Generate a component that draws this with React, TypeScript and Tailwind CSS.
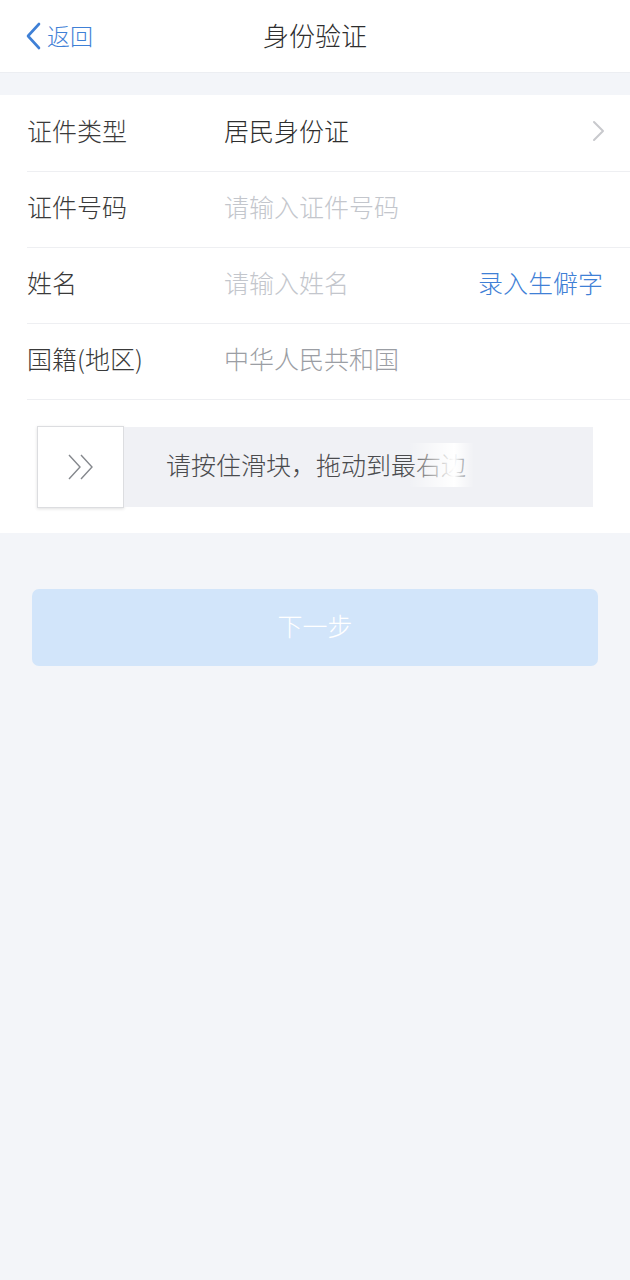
const font = { fontFamily: '"Noto Sans CJK SC", "Noto Sans", sans-serif' };

function Row({ label, children }: { label: string; children: React.ReactNode }) {
  return (
    <div className="ml-[27px] flex h-[76px] items-center border-b border-[#eeeff2] pr-[27px] pb-[5px]">
      <div className="w-[197px] text-[25px] text-[#3a3a3a]">{label}</div>
      <div className="flex flex-1 items-center justify-between text-[25px]">{children}</div>
    </div>
  );
}

export default function App() {
  return (
    <div className="min-h-[1280px] bg-[#f3f5f9] font-light" style={font}>
      {/* header */}
      <div className="relative flex h-[73px] items-center justify-center border-b border-[#eceef2] bg-white pb-[3px]">
        <div className="absolute left-[24px] top-0 flex h-full items-center pb-[1px] text-[#3f80d6]">
          <svg width="20" height="28" viewBox="0 0 20 28" fill="none" className="mr-[3px]">
            <path d="M15 2 L4 14 L15 26" stroke="#3f80d6" strokeWidth="2.6" strokeLinecap="round" strokeLinejoin="round" />
          </svg>
          <span className="text-[23px]">返回</span>
        </div>
        <h1 className="text-[26px] text-[#2e2e2e]">身份验证</h1>
      </div>

      <div className="mt-[22px] bg-white pt-[1px] pb-[25px]">
        <Row label="证件类型">
          <span className="text-[#2e2e2e]">居民身份证</span>
          <svg width="14" height="22" viewBox="0 0 14 22" fill="none" className="mr-[-2px]">
            <path d="M3 2 L12 11 L3 20" stroke="#c8c9cd" strokeWidth="2" strokeLinecap="round" strokeLinejoin="round" />
          </svg>
        </Row>
        <Row label="证件号码">
          <span className="text-[#c3c6cc]">请输入证件号码</span>
        </Row>
        <Row label="姓名">
          <span className="text-[#c3c6cc]">请输入姓名</span>
          <span className="text-[#3f80d6]">录入生僻字</span>
        </Row>
        <Row label="国籍(地区)">
          <span className="text-[#9b9ea4]">中华人民共和国</span>
        </Row>

        {/* slider */}
        <div className="mx-[37px] mt-[26px] flex h-[82px]">
          <div className="flex w-[87px] items-center justify-center border border-[#dcdde0] bg-white shadow-[0_1px_3px_rgba(0,0,0,0.12)]">
            <svg width="30" height="26" viewBox="0 0 30 26" fill="none">
              <path d="M3 1 L14 13 L3 25" stroke="#85888d" strokeWidth="1.4" />
              <path d="M15 1 L26 13 L15 25" stroke="#85888d" strokeWidth="1.4" />
            </svg>
          </div>
          <div className="relative my-[1px] flex flex-1 items-center bg-[#f0f1f5] pb-[5px] pl-[42px]">
            <span className="text-[25px] text-[#4a4b4e]">请按住滑块，拖动到最右边</span>
            <div className="absolute left-[284px] top-[16px] h-[44px] w-[66px] bg-gradient-to-r from-white/0 via-white via-70% to-white/0" />
          </div>
        </div>
      </div>

      <div className="px-[32px] pt-[56px]">
        <button className="flex h-[77px] w-full items-center justify-center rounded-[7px] bg-[#d2e5fa] pb-[3px] text-[25px] text-white">
          下一步
        </button>
      </div>
    </div>
  );
}
